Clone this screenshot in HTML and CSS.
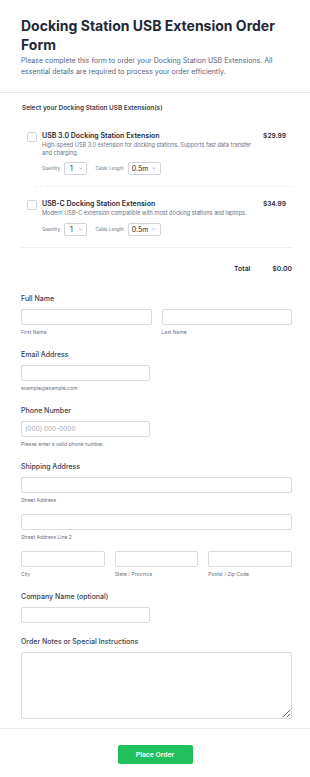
FILE: index.html
```html
<!DOCTYPE html>
<html lang="en">
<head>
    <meta charset="UTF-8">
    <meta name="viewport" content="width=device-width, initial-scale=1.0">
    <title>Docking Station USB Extension Order Form</title>
    <link rel="stylesheet" href="styles.css">
</head>
<body>
    <header class="form-header">
        <h1>Docking Station USB Extension Order Form</h1>
        <p>Please complete this form to order your Docking Station USB Extensions. All essential details are required to process your order efficiently.</p>
    </header>

    <section class="products">
        <h2>Select your Docking Station USB Extension(s)</h2>

        <div class="product">
            <span class="checkbox"></span>
            <div class="product-body">
                <div class="product-name">USB 3.0 Docking Station Extension</div>
                <p class="product-desc">High-speed USB 3.0 extension for docking stations. Supports fast data transfer and charging.</p>
                <div class="options">
                    <span class="opt-label">Quantity</span>
                    <span class="select"><span class="val">1</span><svg viewBox="0 0 10 6" class="chev"><path d="M1 1l4 4 4-4"/></svg></span>
                    <span class="opt-label">Cable Length</span>
                    <span class="select"><span class="val">0.5m</span><svg viewBox="0 0 10 6" class="chev"><path d="M1 1l4 4 4-4"/></svg></span>
                </div>
            </div>
            <span class="price">$29.99</span>
        </div>
        <div class="product-sep"></div>

        <div class="product">
            <span class="checkbox"></span>
            <div class="product-body">
                <div class="product-name">USB-C Docking Station Extension</div>
                <p class="product-desc">Modern USB-C extension compatible with most docking stations and laptops.</p>
                <div class="options">
                    <span class="opt-label">Quantity</span>
                    <span class="select"><span class="val">1</span><svg viewBox="0 0 10 6" class="chev"><path d="M1 1l4 4 4-4"/></svg></span>
                    <span class="opt-label">Cable Length</span>
                    <span class="select"><span class="val">0.5m</span><svg viewBox="0 0 10 6" class="chev"><path d="M1 1l4 4 4-4"/></svg></span>
                </div>
            </div>
            <span class="price">$34.99</span>
        </div>

        <div class="total-row">
            <span>Total</span>
            <span>$0.00</span>
        </div>
    </section>

    <main class="fields">
        <div class="field">
            <label>Full Name</label>
            <div class="row two">
                <div><input type="text"><small>First Name</small></div>
                <div><input type="text"><small>Last Name</small></div>
            </div>
        </div>

        <div class="field">
            <label>Email Address</label>
            <div class="half"><input type="text"><small>example@example.com</small></div>
        </div>

        <div class="field">
            <label>Phone Number</label>
            <div class="half"><input type="text" placeholder="(000) 000-0000"><small>Please enter a valid phone number.</small></div>
        </div>

        <div class="field">
            <label>Shipping Address</label>
            <div><input type="text"><small>Street Address</small></div>
            <div class="line2"><input type="text"><small>Street Address Line 2</small></div>
            <div class="row three line2">
                <div><input type="text"><small>City</small></div>
                <div><input type="text"><small>State / Province</small></div>
                <div><input type="text"><small>Postal / Zip Code</small></div>
            </div>
        </div>

        <div class="field">
            <label>Company Name (optional)</label>
            <div class="half"><input type="text"></div>
        </div>

        <div class="field last">
            <label>Order Notes or Special Instructions</label>
            <textarea></textarea>
        </div>
    </main>

    <footer class="form-footer">
        <button type="button">Place Order</button>
    </footer>
</body>
</html>
```

FILE: styles.css
```css
body {
    margin: 0;
    padding: 0;
    background-color: #ffffff;
    color: #1f2937;
    font-family: 'Inter', 'Noto Sans', sans-serif;
}

.form-header {
    padding: 16px 18px 15px 21px;
    border-bottom: 1px solid #e5e7eb;
}

.form-header h1 {
    margin: 0;
    font-size: 14px;
    line-height: 19px;
    font-weight: 700;
    color: #1f2937;
}

.form-header p {
    margin: 2px 0 0;
    font-size: 7px;
    line-height: 10.5px;
    color: #56647f;
}

.products {
    padding: 11px 18px 0 21px;
}

.products h2 {
    margin: 0 0 6px 1px;
    font-size: 6.4px;
    line-height: 9px;
    font-weight: 600;
    color: #374151;
}

.product {
    display: flex;
    align-items: flex-start;
    padding: 12px 6px 11px 6px;
}

.checkbox {
    flex: none;
    width: 8px;
    height: 8px;
    margin-top: 1px;
    border: 1px solid #d1d5db;
    border-radius: 2px;
    margin-right: 5px;
}

.product-body {
    flex: 1;
    padding-right: 4px;
}

.product-name {
    font-size: 7px;
    line-height: 10px;
    font-weight: 600;
    color: #1f2937;
}

.product-desc {
    margin: 1px 0 0;
    font-size: 5.6px;
    line-height: 7.5px;
    color: #6b7280;
}

.price {
    flex: none;
    font-size: 6.6px;
    line-height: 10px;
    font-weight: 600;
    color: #1f2937;
}

.options {
    display: flex;
    align-items: center;
    margin-top: 5px;
}

.opt-label {
    font-size: 4.5px;
    color: #6b7280;
    margin-right: 4px;
}

.select {
    display: inline-flex;
    align-items: center;
    height: 11px;
    padding: 0 4px 0 3px;
    border: 1px solid #d1d5db;
    border-radius: 2px;
    font-size: 7px;
    color: #1f2937;
    margin-right: 8px;
}

.select .val {
    display: inline-block;
    min-width: 7px;
    text-align: center;
}

.select .chev {
    width: 3.5px;
    height: 2.5px;
    margin-left: 4px;
    fill: none;
    stroke: #6b7280;
    stroke-width: 1.4;
}

.product-sep {
    margin-left: 14px;
    border-top: 1px dashed #eeeff2;
}

.total-row {
    display: flex;
    justify-content: flex-end;
    gap: 22px;
    border-top: 1px solid #eeeff2;
    padding-top: 16px;
    font-size: 6.8px;
    line-height: 9px;
    font-weight: 600;
    color: #1f2937;
}

.fields {
    padding: 21px 18px 0 21px;
}

.field {
    margin-bottom: 14px;
}

.field.last {
    margin-bottom: 9px;
}

.field label {
    display: block;
    font-size: 7px;
    line-height: 10px;
    font-weight: 500;
    color: #374151;
    margin-bottom: 5px;
}

.field input {
    display: block;
    width: 100%;
    height: 16px;
    box-sizing: border-box;
    border: 1px solid #d9dce1;
    border-radius: 2px;
    padding: 0 3px;
    font-family: 'Inter', sans-serif;
    font-size: 6.5px;
    outline: none;
}

.field input::placeholder {
    color: #a3a9b3;
}

.field small {
    display: block;
    margin-top: 4px;
    font-size: 5px;
    line-height: 7px;
    color: #6b7280;
}

.half {
    width: 129px;
}

.row {
    display: grid;
    gap: 10px;
}

.row.two {
    grid-template-columns: 1fr 1fr;
}

.row.three {
    grid-template-columns: 1fr 1fr 1fr;
}

.line2 {
    margin-top: 10px;
}

.field textarea {
    display: block;
    width: 100%;
    height: 67px;
    box-sizing: border-box;
    border: 1px solid #d9dce1;
    border-radius: 2px;
}

.form-footer {
    border-top: 1px solid #eceef1;
    padding: 12px 0 17px;
    text-align: center;
}

.form-footer button {
    width: 75px;
    height: 19px;
    background-color: #20c05c;
    border: none;
    border-radius: 2px;
    color: #ffffff;
    font-family: 'Inter', sans-serif;
    font-size: 6.8px;
    font-weight: 600;
    cursor: pointer;
}
```
